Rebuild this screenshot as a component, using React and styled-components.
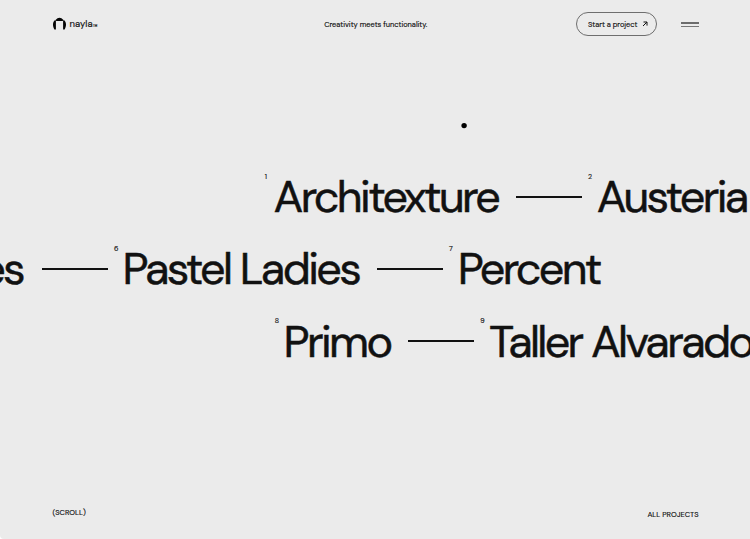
import React from "react";
import styled, { createGlobalStyle } from "styled-components";

const GlobalStyle = createGlobalStyle`
  * { box-sizing: border-box; }
  body {
    margin: 0;
    background: #fff;
    color: #111;
    font-family: "DM Sans", "Inter", sans-serif;
    overflow: hidden;
  }
`;

const Page = styled.div`
  position: relative;
  display: flex;
  flex-direction: column;
  width: 750px;
  height: 539px;
  overflow: hidden;
  background: #ebebeb;
  border-bottom-left-radius: 4px;
  font-size: 7.45px;
  -webkit-text-stroke: 0.15px #111;
`;

const Header = styled.header`
  display: grid;
  grid-template-columns: 1fr auto 1fr;
  align-items: center;
  height: 48.5px;
  padding: 0 51.5px 0 53px;
`;

const Logo = styled.a`
  display: flex;
  align-items: center;
  color: #111;
  font-size: 9.5px;
  line-height: 12px;
`;

const LogoMark = styled.svg`
  width: 13px;
  height: 13px;
  margin: 0 3.5px 1px 0;
`;

const Trademark = styled.span`
  margin-left: 0.5px;
  padding-top: 4px;
  font-size: 2.9px;
`;

const Tagline = styled.p`
  margin: 0;
  padding-top: 1px;
  line-height: 12px;
`;

const Actions = styled.div`
  display: flex;
  justify-content: flex-end;
  align-items: center;
  gap: 24px;
`;

const StartButton = styled.button`
  display: flex;
  align-items: center;
  gap: 5px;
  width: 81px;
  height: 24px;
  padding: 0 0 0 11px;
  border: 1px solid #6e6e6e;
  border-radius: 12px;
  background: transparent;
  color: #111;
  font: inherit;
  letter-spacing: -0.03px;
  white-space: nowrap;
`;

const Arrow = styled.svg`
  width: 6px;
  height: 6px;
`;

const MenuButton = styled.button`
  display: flex;
  flex-direction: column;
  gap: 2px;
  width: 17.5px;
  padding: 0;
  border: 0;
  background: transparent;
`;

const MenuBar = styled.span`
  height: ${(p) => (p.$light ? 1 : 2)}px;
  background: ${(p) => (p.$light ? "#777" : "#6c6c6c")};
`;

const Projects = styled.main`
  flex: 1;
  padding-top: 111.5px;
`;

const Row = styled.div`
  display: flex;
  height: 72.3px;
  padding-left: ${(p) => p.$start}px;
`;

const Index = styled.span`
  flex: none;
  width: 8.7px;
  padding-top: 11.9px;
  font-size: 7px;
  line-height: 10px;
  color: #222;
`;

const Name = styled.span`
  flex: none;
  width: ${(p) => p.$width}px;
  margin-left: ${(p) => p.$shift || 0}px;
  font-size: 44.9px;
  line-height: 74px;
  letter-spacing: ${(p) => p.$tracking}px;
  white-space: nowrap;
  -webkit-text-stroke: 0.5px #111;
`;

const Dash = styled.span`
  flex: none;
  align-self: flex-start;
  width: 66px;
  height: 2px;
  margin: 35.6px 6.3px 0 0;
  background: #111;
`;

const Footer = styled.footer`
  display: flex;
  justify-content: space-between;
  align-items: flex-start;
  height: 32px;
  padding: 0 51.5px 0 52.5px;
  line-height: 12px;
`;

const ScrollHint = styled.span`
  padding-top: 0.4px;
`;

const AllProjects = styled.a`
  padding-top: 2px;
  letter-spacing: 0.03px;
`;

const CursorDot = styled.svg`
  position: absolute;
  left: 460px;
  top: 121px;
  width: 8px;
  height: 9px;
`;

const rows = [
  {
    start: 264.8,
    items: [
      { index: 1, name: "Architexture", width: 242.3, tracking: -2.63 },
      { index: 2, name: "Austeria", width: 170, tracking: -2.62 },
    ],
  },
  {
    start: 0,
    items: [
      { name: "es", width: 61.4, tracking: -2.65, shift: -19.8 },
      { index: 6, name: "Pastel Ladies", width: 254.2, tracking: -2.6 },
      { index: 7, name: "Percent", width: 160, tracking: -2.65 },
    ],
  },
  {
    start: 274.8,
    items: [
      { index: 8, name: "Primo", width: 124.5, tracking: -2.6 },
      { index: 9, name: "Taller Alvarado", width: 290, tracking: -2.63 },
    ],
  },
];

export default function App() {
  return (
    <Page>
      <GlobalStyle />
      <Header>
        <Logo>
          <LogoMark viewBox="0 0 13 13">
            <path
              d="M1.400 12.500C.5 11 0 9.300 0 7.500C0 5.500.9 3.900 2.300 2.800L2.900 4.100V12.500ZM11.600 12.500C12.500 11 13 9.300 13 7.500C13 5.500 12.100 3.900 10.700 2.800L10.100 4.100V12.500ZM2.800 2.700C3.900 1.700 5.100 .8 6.500 .8S9.100 1.700 10.200 2.700L9.800 4H3.200Z"
              fill="#050505"
            />
          </LogoMark>
          nayla
          <Trademark>TM</Trademark>
        </Logo>
        <Tagline>Creativity meets functionality.</Tagline>
        <Actions>
          <StartButton>
            Start a project
            <Arrow viewBox="0 0 6 6" fill="none" stroke="#111" strokeWidth="1">
              <path d="M1 5 4.800 1.200M1.500 1H5V4.600" />
            </Arrow>
          </StartButton>
          <MenuButton aria-label="Menu">
            <MenuBar />
            <MenuBar $light />
          </MenuButton>
        </Actions>
      </Header>
      <Projects>
        {rows.map((row) => (
          <Row key={row.start} $start={row.start}>
            {row.items.map((item, i) => (
              <React.Fragment key={item.name}>
                {item.index && <Index>{item.index}</Index>}
                <Name
                  $width={item.width}
                  $tracking={item.tracking}
                  $shift={item.shift}
                >
                  {item.name}
                </Name>
                {i < row.items.length - 1 && <Dash />}
              </React.Fragment>
            ))}
          </Row>
        ))}
      </Projects>
      <Footer>
        <ScrollHint>(SCROLL)</ScrollHint>
        <AllProjects>ALL PROJECTS</AllProjects>
      </Footer>
      <CursorDot viewBox="0 0 8 9">
        <circle cx="4.100" cy="4.600" r="2.700" fill="#000" />
      </CursorDot>
    </Page>
  );
}
